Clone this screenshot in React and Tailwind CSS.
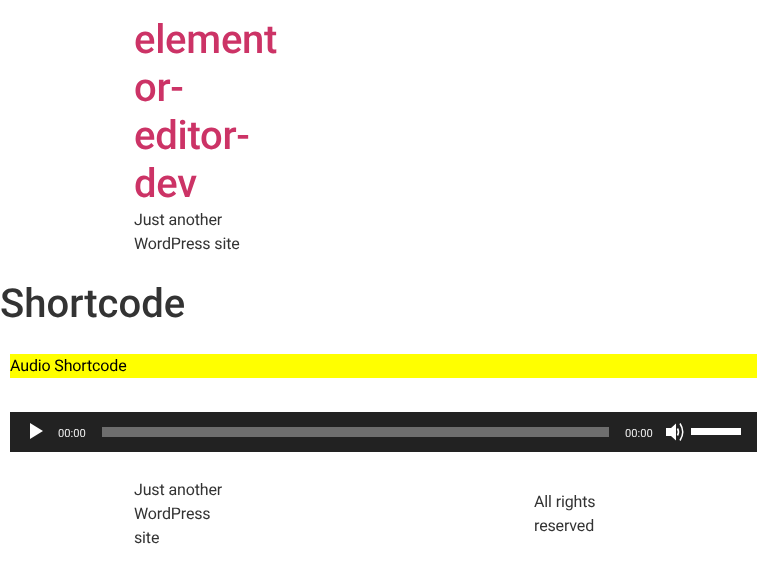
const App = () => {
  return (
    <div className="min-h-[575px] bg-white font-['Roboto',sans-serif] text-[16px] leading-[24px] tracking-[-0.14px] text-[#333] [text-rendering:geometricPrecision] will-change-transform">
      {/* Site header */}
      <header className="pl-[134px] pt-[16px]">
        <div className="w-[150px]">
          <h1 className="break-words text-[40px] font-medium leading-[48px] tracking-[-0.25px] text-[#c36]">element or-editor-dev</h1>
          <p>Just another WordPress site</p>
        </div>
      </header>

      <h2 className="mt-[24px] text-[40px] font-medium leading-[48px] tracking-normal">Shortcode</h2>

      {/* Content */}
      <div className="mt-[26px] pl-[10px] pr-[10px]">
        <div className="h-[24px] bg-[#ff0] text-black">Audio Shortcode</div>
        <div className="mt-[34px] flex h-[40px] items-center bg-[#222] text-white">
          <svg width="16" height="18" viewBox="0 0 16 18" className="mb-[2px] ml-[19px] mr-[13px] shrink-0">
            <path d="M1 1 L14 9 L1 17 Z" fill="#fff" />
          </svg>
          <span className="w-[44px] shrink-0 pt-[4px] text-[11.2px] leading-[16px] tracking-normal text-[#eee]">00:00</span>
          <div className="h-[10px] flex-1 bg-[#6e6e6e]"></div>
          <span className="ml-[16px] w-[40px] shrink-0 pt-[4px] text-[11.2px] leading-[16px] tracking-normal text-[#eee]">00:00</span>
          <svg width="20" height="20" viewBox="0 0 20 20" className="shrink-0">
            <path d="M1 6 H6 L11 1.5 V18.5 L6 14 H1 Z" fill="#fff" />
            <path d="M12.5 6.5 Q14.5 10 12.5 13.5" stroke="#fff" strokeWidth="1.6" fill="none" />
            <path d="M15 1.5 Q20.5 10 15 18.5" stroke="#fff" strokeWidth="1.5" fill="none" />
          </svg>
          <div className="mb-[2px] ml-[6px] mr-[16px] h-[7px] w-[50px] shrink-0 bg-white"></div>
        </div>
      </div>

      {/* Footer */}
      <footer className="mt-[26px] flex pl-[134px]">
        <p className="w-[100px]">Just another WordPress site</p>
        <p className="ml-[300px] mt-[12px] w-[80px]">All rights reserved</p>
      </footer>
    </div>
  )
}

export default App
